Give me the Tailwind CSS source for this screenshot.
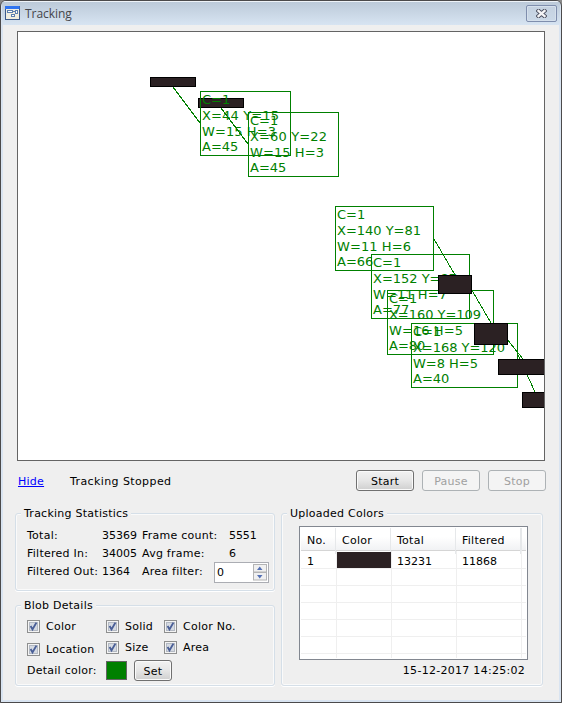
<!DOCTYPE html>
<html lang="en">
<head>
<meta charset="utf-8">
<title>Tracking</title>
<script src="https://cdn.jsdelivr.net/npm/@tailwindcss/browser@4"></script>
</head>
<body class="w-[562px] h-[703px] overflow-hidden bg-[#8a8a8a] font-['DejaVu_Sans',sans-serif] text-[11px] leading-[18px] tracking-[.25px] text-black">
<svg class="hidden">
  <symbol id="check" viewBox="0 0 13 13">
    <rect x=".5" y=".5" width="12" height="12" fill="#f4f4f4" stroke="#8e8f8f"/>
    <rect x="2.5" y="2.5" width="8" height="8" fill="#d5dae2" stroke="#b3b9c3"/>
    <path d="M3.600 6L5.500 9.400L9.400 2.600" fill="none" stroke="#4a5f97" stroke-width="1.900"/>
  </symbol>
</svg>
<div class="w-[562px] h-[703px] border border-[#4b4a4b] rounded-t-[6px] bg-[#d9e4f1] p-px pt-0 flex flex-col overflow-hidden">
  <header class="h-6 shrink-0 flex items-start bg-linear-to-b from-[#bccad9] to-[#d7e4f2] border-t border-[#eef3f8] pl-[3px] pr-[3px]">
    <svg class="w-[15px] h-[14px] mt-1" viewBox="0 0 15 14">
      <rect width="15" height="14" fill="#3c5a8c"/><rect x="0" y="0" width="14.5" height="3" fill="#2f74f0"/>
      <rect x="1" y="3" width="13" height="10" fill="#f0ede0"/>
      <g fill="#fff" stroke="#5d7fae"><rect x="2.5" y="4.5" width="5" height="2"/><rect x="10.500" y="4.500" width="2" height="3"/><rect x="6.500" y="8.500" width="3" height="2"/></g>
      <path d="M7.500 5.500H10" stroke="#5d7fae"/>
    </svg>
    <h1 class="ml-[5px] mt-[3px] font-['Open_Sans',sans-serif] text-[12px] leading-[18px] tracking-[-.05px] text-[#45464c]">Tracking</h1>
    <div class="ml-auto mt-[3px] w-[31px] h-[17px] rounded-[2px] border border-[#7f8ead] bg-linear-to-b from-[#c4d1e0] to-[#cbd9e8] shadow-[inset_0_0_0_1px_#d5e0ec] flex items-center justify-center">
      <svg class="w-[11px] h-[9px]" viewBox="0 0 11 9"><path d="M1 0.500L10 8.500M10 0.500L1 8.500" stroke="#4e5262" stroke-width="4.200"/><path d="M1.600 1.200L9.400 7.800M9.400 1.200L1.600 7.800" stroke="#f5f5f7" stroke-width="2.400"/></svg>
    </div>
  </header>
  <main class="flex-1 mx-px mb-px bg-[#efefef] pt-[6px] pl-[14px]">
    <div class="w-[528px] h-[430px] border border-[#646464] bg-white">
      <svg class="block w-[526px] h-[428px] text-[13px] tracking-normal" viewBox="18 32 526 428" font-family="DejaVu Sans, sans-serif">
        <g fill="#2b2123" stroke="#000" shape-rendering="crispEdges">
          <rect x="150.500" y="77.500" width="45" height="9"/><rect x="198.500" y="98.500" width="45" height="9"/>
        </g>
        <g fill="none" stroke="#008000" shape-rendering="crispEdges">
          <path d="M173 87L200 123M221 108L248 144M434 239L455 275M470 287L491 323M494 323L523 359M518 355L535 392"/>
          <rect x="200.500" y="91.500" width="90" height="64"/><rect x="248.500" y="112.500" width="90" height="64"/>
          <rect x="335.500" y="206.500" width="98" height="64"/><rect x="371.500" y="254.500" width="98" height="64"/>
          <rect x="387.500" y="290.500" width="106" height="64"/><rect x="411.500" y="323.500" width="106" height="64"/>
        </g>
        <g fill="#008000">
          <text x="202" y="104">C=1</text><text x="202" y="120" textLength="77">X=44 Y=15</text><text x="202" y="136" textLength="74">W=15 H=3</text><text x="202" y="151">A=45</text>
          <text x="250" y="125">C=1</text><text x="250" y="141" textLength="77">X=60 Y=22</text><text x="250" y="157" textLength="74">W=15 H=3</text><text x="250" y="172">A=45</text>
          <text x="337" y="219">C=1</text><text x="337" y="235" textLength="84">X=140 Y=81</text><text x="337" y="251" textLength="74">W=11 H=6</text><text x="337" y="266">A=66</text>
          <text x="373" y="267">C=1</text><text x="373" y="283" textLength="84">X=152 Y=87</text><text x="373" y="299" textLength="74">W=11 H=7</text><text x="373" y="314">A=77</text>
          <text x="389" y="303">C=1</text><text x="389" y="319" textLength="92">X=160 Y=109</text><text x="389" y="335" textLength="74">W=16 H=5</text><text x="389" y="350">A=80</text>
          <text x="413" y="336">C=1</text><text x="413" y="352" textLength="92">X=168 Y=120</text><text x="413" y="368" textLength="65">W=8 H=5</text><text x="413" y="383">A=40</text>
        </g>
        <g fill="#2b2123" stroke="#000" shape-rendering="crispEdges">
          <rect x="438.500" y="275.500" width="33" height="18"/><rect x="474.500" y="323.500" width="33" height="21"/>
          <rect x="498.500" y="359.500" width="50" height="15"/><rect x="522.500" y="392.500" width="30" height="15"/>
        </g>
      </svg>
    </div>

    <div class="flex items-start pt-[9px] h-[52px]">
      <a class="w-[53px] pl-px mt-[3px] text-[#0000ff] underline">Hide</a>
      <span class="mt-[3px] tracking-[.4px]">Tracking Stopped</span>
      <div class="ml-auto mr-[13px] flex gap-2 leading-[21px]">
        <button class="w-[58px] h-[21px] rounded-[3px] border border-[#707070] bg-linear-to-b from-[#f2f2f2] via-[#e6e6e6] to-[#cfcfcf] shadow-[inset_0_0_0_1px_#fafafa]">Start</button>
        <button class="w-[58px] h-[21px] rounded-[3px] border border-[#adb2b5] bg-[#f4f4f4] text-[#a0a0a0]">Pause</button>
        <button class="w-[58px] h-[21px] rounded-[3px] border border-[#adb2b5] bg-[#f4f4f4] text-[#a0a0a0]">Stop</button>
      </div>
    </div>

    <div class="flex gap-[6px] -ml-[2px]">
      <div class="flex flex-col gap-[14px]">
        <section class="w-[260px] h-[78px] rounded-[3px] border border-[#d5dfe8] shadow-[inset_0_0_0_1px_#fafafa,0_1px_0_#fff] px-[5px]">
          <h2 class="w-max -mt-[9px] px-[3px] bg-[#efefef]">Tracking Statistics</h2>
          <div class="grid grid-cols-[75px_40px_72px_55px] mt-[4px] pl-[6px] auto-rows-[18px] whitespace-nowrap">
            <span>Total:</span><span class="tracking-normal">35369</span><span>Frame count:</span><span class="pl-[15px] tracking-[-.1px]">5551</span>
            <span>Filtered In:</span><span class="tracking-normal">34005</span><span>Avg frame:</span><span class="pl-[15px]">6</span>
            <span>Filtered Out:</span><span class="tracking-normal">1364</span><span>Area filter:</span>
            <span class="w-[55px] h-[21px] -mt-px border border-[#abadb3] bg-white flex justify-between pl-[2px] pr-px py-px leading-[18px]">0
              <svg class="w-[14px] h-[17px]" viewBox="0 0 14 17"><g fill="#f0f0f0" stroke="#b4b4b4"><rect x=".5" y=".5" width="13" height="7.500"/><rect x=".5" y="8.500" width="13" height="7.500"/></g><path d="M4 6L6.750 2.500L9.500 6zM4 11L6.750 14.500L9.500 11z" fill="#5470b4"/></svg>
            </span>
          </div>
        </section>
        <section class="w-[260px] h-[81px] rounded-[3px] border border-[#d5dfe8] shadow-[inset_0_0_0_1px_#fafafa,0_1px_0_#fff] px-[5px]">
          <h2 class="w-max -mt-[9px] px-[3px] bg-[#efefef]">Blob Details</h2>
          <div class="grid grid-cols-[79px_58px_90px] pl-[6px] mt-[3px] whitespace-nowrap [&_svg]:-mt-[2px]">
            <label class="flex items-center gap-[6px] h-[18px]"><svg class="size-[13px]"><use href="#check"/></svg>Color</label>
            <label class="flex items-center gap-[6px] h-[18px]"><svg class="size-[13px]"><use href="#check"/></svg>Solid</label>
            <label class="flex items-center gap-[6px] h-[18px]"><svg class="size-[13px]"><use href="#check"/></svg>Color No.</label>
            <label class="flex items-center gap-[6px] h-[18px] mt-[5px]"><svg class="size-[13px]"><use href="#check"/></svg>Location</label>
            <label class="flex items-center gap-[6px] h-[18px] mt-[3px]"><svg class="size-[13px]"><use href="#check"/></svg>Size</label>
            <label class="flex items-center gap-[6px] h-[18px] mt-[3px]"><svg class="size-[13px]"><use href="#check"/></svg>Area</label>
          </div>
          <div class="flex items-start pl-[6px] mt-px">
            <span class="w-[79px] mt-[2px]">Detail color:</span>
            <span class="w-[21px] h-[19px] mt-px border border-[#646464] bg-[#008000]"></span>
            <button class="ml-[7px] w-[38px] h-[21px] leading-[21px] rounded-[3px] border border-[#707070] bg-linear-to-b from-[#f2f2f2] via-[#e6e6e6] to-[#cfcfcf] shadow-[inset_0_0_0_1px_#fafafa]">Set</button>
          </div>
        </section>
      </div>

      <section class="w-[262px] h-[173px] rounded-[3px] border border-[#d5dfe8] shadow-[inset_0_0_0_1px_#fafafa,0_1px_0_#fff] px-[5px]">
        <h2 class="w-max -mt-[9px] px-[3px] bg-[#efefef]">Uploaded Colors</h2>
        <div class="ml-[12px] mt-[3px] w-[229px] h-[134px] border border-[#828790] bg-white p-px">
          <div class="grid grid-cols-[35px_55px_65px_66px_4px] h-[23px] border-b border-[#d5d5d5] bg-linear-to-b from-white from-40% to-[#f1f2f4] leading-[26px]">
            <span class="border-r border-[#e6e8ea] pl-[6px]">No.</span><span class="border-r border-[#e6e8ea] pl-[6px]">Color</span><span class="border-r border-[#e6e8ea] pl-[6px]">Total</span><span class="border-r-2 border-[#e6e8ea] pl-[6px]">Filtered</span><span></span>
          </div>
          <div class="grid grid-cols-[36px_55px_65px_65px_4px] grid-rows-[18px_17px_17px_17px_17px_17px_4px] [&>span]:border-[#efefef] [&>span]:border-b [&>span]:border-r">
            <span class="pl-[6px] leading-[22px]">1</span><span class="pt-px"><i class="block w-[54px] h-[16px] bg-[#2b2123]"></i></span><span class="pl-[5px] leading-[22px] tracking-normal">13231</span><span class="pl-[5px] leading-[22px] tracking-normal">11868</span><span class="border-r-0!"></span>
            <span></span><span></span><span></span><span></span><span class="border-r-0!"></span>
            <span></span><span></span><span></span><span></span><span class="border-r-0!"></span>
            <span></span><span></span><span></span><span></span><span class="border-r-0!"></span>
            <span></span><span></span><span></span><span></span><span class="border-r-0!"></span>
            <span></span><span></span><span></span><span></span><span class="border-r-0!"></span>
            <span class="border-b-0!"></span><span class="border-b-0!"></span><span class="border-b-0!"></span><span class="border-b-0!"></span><span class="border-0!"></span>
          </div>
        </div>
        <p class="text-right mt-[2px] pr-[12px] tracking-[.28px]">15-12-2017 14:25:02</p>
      </section>
    </div>
  </main>
</div>
</body>
</html>
